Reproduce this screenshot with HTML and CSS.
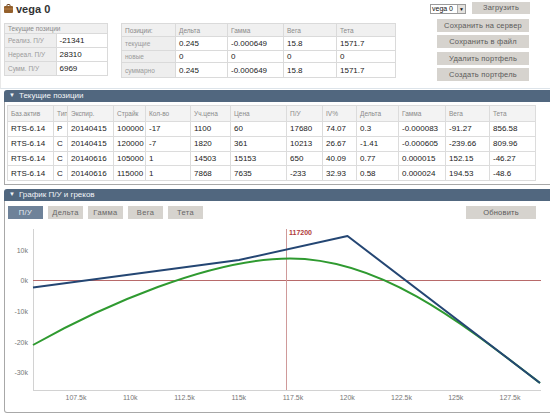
FILE: index.html
```html
<!DOCTYPE html>
<html>
<head>
<meta charset="utf-8">
<link rel="stylesheet" href="styles.css">
</head>
<body>
<div class="top">
  <div class="left">
    <div class="title">
      <svg class="case" width="9" height="9" viewBox="0 0 9 9">
        <rect class="case-handle" x="3" y="0.5" width="3" height="2" rx="0.5"/>
        <rect class="case-body" x="0" y="2" width="9" height="7" rx="1"/>
        <rect class="case-band" x="0" y="4.5" width="9" height="1"/>
      </svg>
      <span class="title-text">vega 0</span>
    </div>
    <table class="kv">
      <tr><th colspan="2">Текущие позиции</th></tr>
      <tr><td class="lbl">Реализ. П/У</td><td>-21341</td></tr>
      <tr><td class="lbl">Нереал. П/У</td><td>28310</td></tr>
      <tr><td class="lbl">Сумм. П/У</td><td>6969</td></tr>
    </table>
  </div>
  <table class="greeks">
    <tr class="gh"><th class="c1">Позиции:</th><th class="c2">Дельта</th><th class="c3">Гамма</th><th class="c4">Вега</th><th class="c5">Тета</th></tr>
    <tr class="g1"><td class="lbl">текущие</td><td>0.245</td><td>-0.000649</td><td>15.8</td><td>1571.7</td></tr>
    <tr class="g2"><td class="lbl">новые</td><td>0</td><td>0</td><td>0</td><td>0</td></tr>
    <tr class="g3"><td class="lbl">суммарно</td><td>0.245</td><td>-0.000649</td><td>15.8</td><td>1571.7</td></tr>
  </table>
  <div class="actions">
    <div class="loadrow">
      <div class="sel"><span class="sel-text">vega 0</span><span class="sel-arr">▼</span></div>
      <div class="btn load">Загрузить</div>
    </div>
    <div class="btn wide first">Сохранить на сервер</div>
    <div class="btn wide">Сохранить в файл</div>
    <div class="btn wide">Удалить портфель</div>
    <div class="btn wide">Создать портфель</div>
  </div>
</div>

<div class="panel p1">
  <div class="phead"><span class="tri">▼</span>Текущие позиции</div>
  <div class="pbody b1">
    <table class="pos">
      <colgroup>
        <col style="width:46px"><col style="width:14px"><col style="width:46px"><col style="width:32px"><col style="width:45px"><col style="width:40px"><col style="width:56px"><col style="width:36px"><col style="width:34px"><col style="width:42px"><col style="width:47px"><col style="width:44px"><col style="width:46px">
      </colgroup>
      <tr class="ph"><th>Баз.актив</th><th>Тип</th><th>Экспир.</th><th>Страйк</th><th>Кол-во</th><th>Уч.цена</th><th>Цена</th><th>П/У</th><th>IV%</th><th>Дельта</th><th>Гамма</th><th>Вега</th><th>Тета</th></tr>
      <tr><td>RTS-6.14</td><td>P</td><td>20140415</td><td>100000</td><td>-17</td><td>1100</td><td>60</td><td>17680</td><td>74.07</td><td>0.3</td><td>-0.000083</td><td>-91.27</td><td>856.58</td></tr>
      <tr><td>RTS-6.14</td><td>C</td><td>20140415</td><td>120000</td><td>-7</td><td>1820</td><td>361</td><td>10213</td><td>26.67</td><td>-1.41</td><td>-0.000605</td><td>-239.66</td><td>809.96</td></tr>
      <tr><td>RTS-6.14</td><td>C</td><td>20140616</td><td>105000</td><td>1</td><td>14503</td><td>15153</td><td>650</td><td>40.09</td><td>0.77</td><td>0.000015</td><td>152.15</td><td>-46.27</td></tr>
      <tr><td>RTS-6.14</td><td>C</td><td>20140616</td><td>115000</td><td>1</td><td>7868</td><td>7635</td><td>-233</td><td>32.93</td><td>0.58</td><td>0.000024</td><td>194.53</td><td>-48.6</td></tr>
    </table>
  </div>
</div>

<div class="panel p2">
  <div class="phead"><span class="tri">▼</span>График П/У и греков</div>
  <div class="pbody b2">
    <div class="toolbar">
      <div class="tabs">
        <div class="tab active">П/У</div>
        <div class="tab">Дельта</div>
        <div class="tab">Гамма</div>
        <div class="tab">Вега</div>
        <div class="tab">Тета</div>
      </div>
      <div class="btn refresh">Обновить</div>
    </div>
    <svg class="chart" width="545" height="193" viewBox="5 218 545 193">
      <line class="axis" x1="33.5" y1="228" x2="33.5" y2="389"/>
      <line class="axis" x1="33" y1="389.5" x2="541" y2="389.5"/>
      <g class="ylab">
        <text x="28" y="251.5">10k</text>
        <text x="28" y="281.5">0k</text>
        <text x="28" y="312.5">-10k</text>
        <text x="28" y="343.5">-20k</text>
        <text x="28" y="373.5">-30k</text>
      </g>
      <g class="xlab">
        <text x="76" y="398.5">107.5k</text>
        <text x="130.25" y="398.5">110k</text>
        <text x="184.5" y="398.5">112.5k</text>
        <text x="238.75" y="398.5">115k</text>
        <text x="293" y="398.5">117.5k</text>
        <text x="347.25" y="398.5">120k</text>
        <text x="401.5" y="398.5">122.5k</text>
        <text x="455.75" y="398.5">125k</text>
        <text x="510" y="398.5">127.5k</text>
      </g>
      <line class="zero" x1="33" y1="279.5" x2="541" y2="279.5"/>
      <line class="mark" x1="286.5" y1="228" x2="286.5" y2="389"/>
      <text class="marklab" x="289" y="233.5">117200</text>
      <path class="green" d="M33,344 C103,304.8 210,257.5 290,257.5 C380,257.5 460,320.4 540,382"/>
      <polyline class="blue" points="33,286.5 239,259 347.5,235 540,382"/>
    </svg>
  </div>
</div>
</body>
</html>
```

FILE: styles.css
```css
html, body {
  margin: 0;
  padding: 0;
  overflow: hidden;
  background: #fff;
}
body {
  width: 550px;
  height: 415px;
  font-family: "Liberation Sans", Arial, sans-serif;
  color: #222;
}

/* ---------- top area ---------- */
.top {
  display: flex;
  height: 89px;
  box-sizing: border-box;
  border-bottom: 1px solid #dde4ea;
  border-left: 1px solid #e8e8e8;
}
.left {
  padding-left: 3px;
  width: 105px;
}
.title {
  height: 17px;
  display: flex;
  align-items: center;
  gap: 3px;
}
.case {
  display: block;
  margin-top: 0;
}
.case-body { fill: #94602c; }
.case-handle { fill: none; stroke: #6b4220; stroke-width: 1; }
.case-band { fill: #b98048; }
.title-text {
  font-size: 11px;
  font-weight: bold;
  color: #333;
  margin-top: 1px;
}

table {
  border-collapse: collapse;
}
.kv {
  margin-top: 6px;
  width: 104px;
  table-layout: fixed;
}
.kv th {
  height: 9px;
  padding: 0 3px;
  background: #f0f0f0;
  border: 1px solid #dadada;
  font-size: 6.5px;
  font-weight: normal;
  color: #8a8a8a;
  text-align: left;
  line-height: 9px;
}
.kv td {
  height: 13px;
  padding: 0 3px;
  border: 1px solid #dadada;
  font-size: 8px;
  line-height: 13px;
  width: 45px;
}
.lbl {
  background: #eeeeee;
  color: #9a9a9a;
  font-size: 6.5px !important;
}

.greeks {
  margin-top: 23px;
  margin-left: 12px;
  width: 239px;
  height: 54px;
  table-layout: fixed;
  align-self: flex-start;
}
.greeks th {
  background: #f0f0f0;
  border: 1px solid #dadada;
  font-size: 6.5px;
  font-weight: normal;
  color: #8a8a8a;
  text-align: left;
  padding: 0 3px;
  height: 12px;
}
.greeks .c1 { width: 47px; }
.greeks .c2 { width: 45px; }
.greeks .c3 { width: 49px; }
.greeks .c4 { width: 46px; }
.greeks .c5 { width: 52px; }
.greeks td {
  border: 1px solid #dadada;
  padding: 0 3px;
  font-size: 8px;
}
.greeks .g1 td { height: 13px; }
.greeks .g2 td { height: 11px; }
.greeks .g3 td { height: 14px; }

.actions {
  margin-left: auto;
  margin-right: 20px;
  padding-top: 2px;
  display: flex;
  flex-direction: column;
  align-items: flex-end;
}
.loadrow {
  display: flex;
  align-items: center;
  gap: 6px;
}
.sel {
  width: 36px;
  height: 10px;
  box-sizing: border-box;
  border: 1px solid #9a9a9a;
  background: #fff;
  display: flex;
  align-items: center;
  justify-content: space-between;
  margin-top: 2px;
}
.sel-text {
  font-size: 7px;
  color: #111;
  padding-left: 1px;
  line-height: 8px;
}
.sel-arr {
  width: 7px;
  height: 8px;
  background: #e4e2de;
  border-left: 1px solid #b0b0b0;
  font-size: 5px;
  line-height: 8px;
  text-align: center;
  color: #111;
}
.btn {
  background: #d6d3ce;
  color: #5a5a5a;
  font-size: 7.5px;
  letter-spacing: 0.2px;
  text-align: center;
  box-sizing: border-box;
}
.load {
  width: 58px;
  height: 12px;
  line-height: 12px;
}
.wide {
  width: 92px;
  height: 13px;
  line-height: 13px;
  margin-right: 1px;
  margin-top: 3.33px;
}
.wide.first {
  margin-top: 5px;
}

/* ---------- panels ---------- */
.panel {
  margin-left: 4px;
  margin-right: -6px;
}
.p1 { margin-top: 1px; }
.p2 { margin-top: 4px; }
.phead {
  height: 12px;
  line-height: 12px;
  background: #51677f;
  color: #f2f5f8;
  font-size: 8px;
  padding-left: 5px;
  border-radius: 3px 0 0 0;
}
.tri {
  font-size: 6px;
  margin-right: 4px;
  position: relative;
  top: -1px;
}
.pbody {
  border: 1px solid #a8a8a8;
  border-top: none;
  background: #fff;
}
.b1 {
  padding: 3px 0 3px 2px;
}
.b2 {
  border-bottom-left-radius: 3px;
}

.pos {
  width: 528px;
  table-layout: fixed;
}
.pos th {
  height: 15px;
  background: #f3f3f3;
  border: 1px solid #dcdcdc;
  font-size: 6.5px;
  font-weight: normal;
  color: #8a8a8a;
  text-align: left;
  padding: 0 3px;
  white-space: nowrap;
  overflow: hidden;
}
.pos td {
  height: 13.75px;
  border: 1px solid #dcdcdc;
  font-size: 8px;
  padding: 0 3px;
  white-space: nowrap;
  overflow: hidden;
}

.toolbar {
  display: flex;
  justify-content: space-between;
  padding: 5px 19px 0 3px;
}
.tabs {
  display: flex;
  gap: 5px;
}
.tab {
  width: 35px;
  height: 13px;
  line-height: 13px;
  background: #d6d3ce;
  color: #666;
  font-size: 7.5px;
  letter-spacing: 0.4px;
  text-align: center;
}
.tab.active {
  background: #6e8299;
  color: #e6ecf2;
}
.refresh {
  width: 70px;
  height: 13px;
  line-height: 13px;
}

.chart {
  display: block;
}
.axis {
  stroke: #d2d2d2;
  stroke-width: 1;
}
.ylab text {
  font-size: 7px;
  fill: #777;
  text-anchor: end;
  font-family: "Liberation Sans", Arial, sans-serif;
}
.xlab text {
  font-size: 7px;
  fill: #777;
  text-anchor: middle;
  font-family: "Liberation Sans", Arial, sans-serif;
}
.zero {
  stroke: #b86a6a;
  stroke-width: 1;
}
.mark {
  stroke: #cf9a9a;
  stroke-width: 1;
}
.marklab {
  font-size: 7px;
  font-weight: bold;
  fill: #b03a3a;
  font-family: "Liberation Sans", Arial, sans-serif;
}
.green {
  fill: none;
  stroke: #2f9a30;
  stroke-width: 2;
}
.blue {
  fill: none;
  stroke: #244673;
  stroke-width: 2;
  stroke-linejoin: round;
}
```
